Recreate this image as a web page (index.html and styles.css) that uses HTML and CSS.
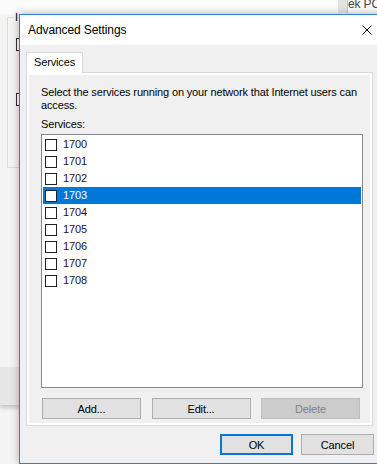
FILE: index.html
```html
<!DOCTYPE html>
<html lang="en">
<head>
  <meta charset="UTF-8">
  <title>Advanced Settings</title>
  <link rel="stylesheet" href="styles.css">
</head>
<body>
  <div class="desk">
    <!-- window lying behind the dialog -->
    <div class="bg-strip"></div>
    <div class="bg-group"><span class="bg-label">I</span></div>
    <span class="bg-check first"></span>
    <span class="bg-check second"></span>
    <div class="bg-bar"></div>
    <div class="bg-tab"></div>
    <span class="bg-title">ek PC</span>

    <div class="dialog">
      <div class="titlebar">
        <span class="title">Advanced Settings</span>
        <span class="close">
          <svg width="10" height="10" viewBox="0 0 10 10"><path d="M0.5 0.5 L9.5 9.5 M9.5 0.5 L0.5 9.5" stroke="#000" stroke-width="1" fill="none"/></svg>
        </span>
      </div>

      <div class="dlg-body">
        <div class="tabs">
          <div class="tab">Services</div>
        </div>
        <div class="tab-pane">
          <div class="page">
            <p class="intro">Select the services running on your network that Internet users can access.</p>
            <div class="label">Services:</div>
            <ul class="list">
              <li><span class="box"></span>1700</li>
              <li><span class="box"></span>1701</li>
              <li><span class="box"></span>1702</li>
              <li class="selected"><span class="box"></span>1703</li>
              <li><span class="box"></span>1704</li>
              <li><span class="box"></span>1705</li>
              <li><span class="box"></span>1706</li>
              <li><span class="box"></span>1707</li>
              <li><span class="box"></span>1708</li>
            </ul>
            <div class="list-btns">
              <button class="btn wide">Add...</button>
              <button class="btn wide">Edit...</button>
              <button class="btn wide" disabled>Delete</button>
            </div>
          </div>
        </div>
        <div class="footer">
          <button class="btn default">OK</button>
          <button class="btn">Cancel</button>
        </div>
      </div>
    </div>
  </div>
</body>
</html>
```

FILE: styles.css
```css
body {
  margin: 0;
  font-family: "Liberation Sans", Arial, sans-serif;
  font-size: 11px;
  letter-spacing: -0.15px;
  color: #000;
}
.desk {
  position: relative;
  width: 377px;
  height: 464px;
  overflow: hidden;
  background: #f4f4f4;
}

/* background window */
.bg-strip {
  position: absolute;
  left: 0;
  top: 0;
  width: 377px;
  height: 14px;
  background: #fbfbfb;
}
.bg-group {
  position: absolute;
  left: 7px;
  top: 17px;
  width: 30px;
  height: 149px;
  border: 1px solid #dcdcdc;
}
.bg-label {
  position: absolute;
  left: 6px;
  top: -7px;
  background: #f4f4f4;
  padding: 0 1px;
  font-size: 11px;
}
.bg-check {
  position: absolute;
  left: 16px;
  width: 11px;
  height: 11px;
  border: 1px solid #333;
  background: #fff;
}
.bg-check.first { top: 38px; }
.bg-check.second { top: 93px; }
.bg-bar {
  position: absolute;
  left: 0;
  top: 367px;
  width: 30px;
  height: 38px;
  background: #e6e6e6;
  box-shadow: 0 3px 4px rgba(0,0,0,0.18);
}
.bg-tab {
  position: absolute;
  left: 338px;
  top: 0;
  width: 9px;
  height: 13px;
  background: #e3e3e3;
  border-right: 1px solid #c8c8c8;
}
.bg-title {
  position: absolute;
  left: 348px;
  top: -3px;
  font-size: 12px;
  white-space: nowrap;
  color: #444;
}

/* dialog */
.dialog {
  position: absolute;
  left: 19px;
  top: 14px;
  width: 365px;
  height: 448px;
  border: 1px solid #2b7fd4;
  background: #f0f0f0;
  box-shadow: 0 0 8px rgba(0,0,0,0.3);
  display: flex;
  flex-direction: column;
}
.titlebar {
  height: 30px;
  background: #fff;
  display: flex;
  align-items: center;
  justify-content: space-between;
  padding-left: 8px;
}
.title {
  font-size: 12px;
  letter-spacing: -0.1px;
}
.close {
  width: 36px;
  height: 30px;
  display: flex;
  align-items: center;
  justify-content: center;
}
.close svg {
  display: block;
}
.dlg-body {
  flex: 1;
  padding: 7px 12px 0 6px;
  display: flex;
  flex-direction: column;
}
.tabs {
  display: flex;
  position: relative;
  z-index: 1;
  margin-bottom: -1px;
}
.tab {
  width: 48px;
  height: 18px;
  padding-bottom: 2px;
  line-height: 18px;
  padding-left: 7px;
  background: #fff;
  border: 1px solid #d9d9d9;
  border-bottom: none;
}
.tab-pane {
  height: 348px;
  border: 1px solid #d9d9d9;
  padding: 2px;
  background: #fff;
}
.page {
  height: 348px;
  background: #f0f0f0;
  padding: 11px 9px 0 12px;
  box-sizing: border-box;
  display: flex;
  flex-direction: column;
}
.intro {
  margin: 0;
  line-height: 13px;
}
.label {
  margin-top: 6px;
  line-height: 13px;
}
.list {
  list-style: none;
  margin: 3px 0 0 0;
  padding: 1px;
  width: 318px;
  height: 250px;
  border: 1px solid #828790;
  background: #fff;
}
.list li {
  height: 17px;
  line-height: 17px;
  padding-left: 2px;
  display: flex;
  align-items: center;
  color: #1a1028;
}
.list li.selected {
  background: #0078d7;
  color: #fff;
}
.box {
  width: 10px;
  height: 10px;
  border: 1px solid #222;
  background: #fff;
  margin-right: 6px;
  flex-shrink: 0;
}
.list-btns {
  display: flex;
  justify-content: space-between;
  margin: 10px 1px 0 1px;
  width: 318px;
}
.btn {
  font-family: "Liberation Sans", Arial, sans-serif;
  font-size: 11px;
  letter-spacing: -0.15px;
  height: 21px;
  width: 73px;
  padding: 0;
  background: #e1e1e1;
  border: 1px solid #adadad;
  color: #000;
}
.btn.wide {
  width: 99px;
}
.btn:disabled {
  background: #cccccc;
  border-color: #bfbfbf;
  color: #838383;
}
.btn.default {
  border: 2px solid #0078d7;
}
.footer {
  display: flex;
  justify-content: flex-end;
  gap: 8px;
  margin-top: 8px;
  margin-right: -1px;
}
```
